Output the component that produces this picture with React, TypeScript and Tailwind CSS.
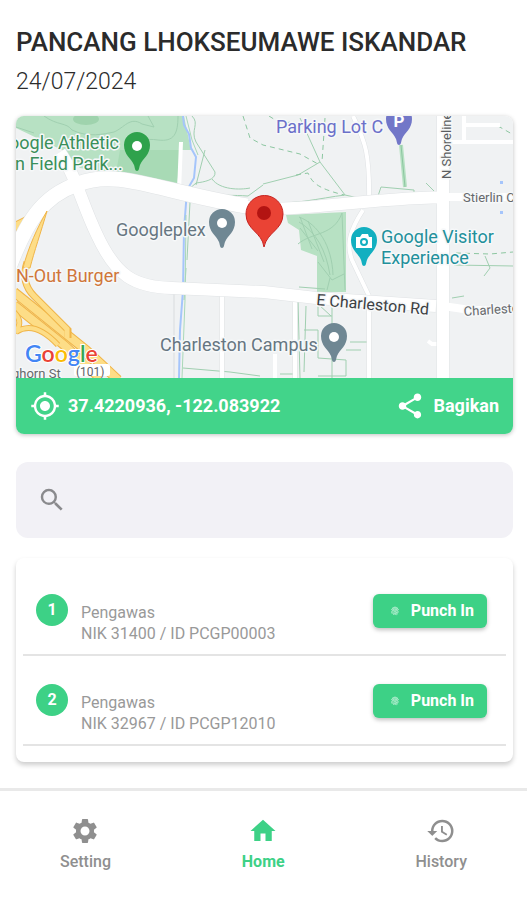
import React, { useState } from 'react'
import { MdFingerprint, MdHistory, MdHome, MdMyLocation, MdSearch, MdSettings, MdShare } from 'react-icons/md'

const members = [
  { no: 1, role: 'Pengawas', nik: '31400', id: 'PCGP00003' },
  { no: 2, role: 'Pengawas', nik: '32967', id: 'PCGP12010' },
]

const tabs = [
  { label: 'Setting', icon: MdSettings },
  { label: 'Home', icon: MdHome },
  { label: 'History', icon: MdHistory },
]

// Anchored at the tip of the pin
function Pin({ x, y, color, children }: { x: number; y: number; color: string; children?: React.ReactNode }) {
  return (
    <g transform={`translate(${x} ${y})`}>
      <path d="M0 1C-2 1-2-2-3-5C-6-12-13-15-13-25A13 13 0 0 1 13-25C13-15 6-12 3-5C2-2 2 1 0 1Z" fill={color} />
      {children ?? <circle cy="-24" r="5" fill="#fff" />}
    </g>
  )
}

function MapLabel({ x, y, color, size = 18, children }: { x: number; y: number; color: string; size?: number; children: React.ReactNode }) {
  return (
    <text x={x} y={y} fill={color} fontSize={size} stroke="#f6f8f9" strokeWidth="3" strokeLinejoin="round" paintOrder="stroke">
      {children}
    </text>
  )
}

function MapView() {
  return (
    <svg className="block w-full" viewBox="16 116 497 262" role="img" aria-label="Map">
      <rect x="16" y="116" width="497" height="262" fill="#f0f2f3" />

      {/* Parks */}
      <path d="M16 116H184L191 150H179L176 189L120 174L80 168L62 150L16 128Z" fill="#b7e1c3" />
      <path d="M120 150H180L177 189L116 173Z" fill="#a8dab5" />
      <ellipse cx="86" cy="119" rx="13" ry="6" fill="#9fd3ad" />
      <path d="M286 215L346 212V292H317V256L301 250L299 230L288 223Z" fill="#b7e1c3" />

      {/* Trails */}
      <g fill="none" stroke="#a0cfb0" strokeWidth="1">
        <path d="M44 116C58 126 66 122 72 130C88 138 104 134 114 132C124 128 130 116 142 124L154 127L148 116" />
        <path d="M16 127L34 133M178 116C178 134 174 142 158 140C146 138 138 142 130 140" />
        <path d="M192 116C200 124 190 130 196 142L215 172C216 180 204 182 196 183L188 190C190 198 220 194 248 196L263 185" />
        <path d="M205 150L196 185M212 179C220 190 240 190 250 188M190 202L187 260" />
        <path d="M300 118L320 162L345 195L363 199M263 184L298 175L320 162M263 202C290 206 320 198 345 195" />
        <path d="M378 196L381 187L414 190V193L384 195M426 183L435 192" />
        <path d="M299 217C318 224 332 246 333 275M299 222C316 232 326 250 330 275M300 228L318 251M298 244C312 232 334 236 342 213M342 213L345 290M318 262L332 280L344 274M330 278L327 290" />
        <path d="M300 217L312 249M308 221L324 262" />
        <path d="M298 300L300 378M306 306L304 372M318 305V316H332V304H318L331 316M304 330H318V358L346 360V376H318M350 342H367M346 350H361M332 316V378M318 342H304M280 374H293M183 368L230 372L260 376" />
        <path d="M186 268L184 300M299 287L325 289M454 265L513 266M485 256L490 268L484 276M452 298L464 296" />
      </g>
      <g fill="none" stroke="#8cc6a0" strokeWidth="1" strokeDasharray="5 4">
        <path d="M243 116L250 138L263 145L300 154L318 164M269 116L280 123L294 122M325 118L322 162M296 175L308 173C312 182 316 188 344 195" />
        <path d="M456 253L490 254L513 252M498 126L512 134" />
      </g>
      <path d="M401 145L405 187" stroke="#b7e1c3" strokeWidth="4" />
      <path d="M401 145L405 187" stroke="#8cc6a0" strokeWidth="1" />

      {/* Creek */}
      <path d="M183 116L184 125L189 134L191 148L196 157L194 178L187 190L184 230L183 290L180 330L179 378" fill="none" stroke="#a5c5fb" strokeWidth="2" />
      <path d="M186 116L192 140L198 155M186 215L185 300L182 378" fill="none" stroke="#a9d8b8" strokeWidth="1" />
      <path d="M174 290V378" stroke="#d9dcde" strokeWidth="1" />
      <rect x="500" y="181" width="3" height="3" fill="#a5c5fb" />
      <rect x="500" y="211" width="3" height="3" fill="#a5c5fb" />

      {/* Highway */}
      <g fill="none">
        <path d="M14 227L36 216" stroke="#f0b548" strokeWidth="9" />
        <path d="M14 227L36 216" stroke="#fddd87" strokeWidth="7" />
        <path d="M14 292L86 350L118 380" stroke="#f0b548" strokeWidth="10" />
        <path d="M14 292L86 350L118 380" stroke="#fddd87" strokeWidth="8" />
        <path d="M14 305L64 345L100 378" stroke="#f0b548" strokeWidth="10" />
        <path d="M14 305L64 345L100 378" stroke="#fddd87" strokeWidth="8" />
        <path d="M16 332C28 324 42 328 58 345M14 312C22 320 20 328 14 332" stroke="#f0b548" strokeWidth="6" />
        <path d="M16 332C28 324 42 328 58 345M14 312C22 320 20 328 14 332" stroke="#fddd87" strokeWidth="4" />
      </g>

      {/* Minor roads */}
      <g fill="none" stroke="#dfe2e4" strokeWidth="5">
        <path d="M353 116C364 140 370 150 369 202M363 210C350 230 346 244 352 260L369 296V378M222 290V378M295 298V378" />
      </g>
      <g fill="none" stroke="#fff" strokeWidth="4">
        <path d="M353 116C364 140 370 150 369 202M363 210C350 230 346 244 352 260L369 296V378M222 290V378M295 298V378" />
        <path d="M181 142L179 192M443 142H513M464 116V142M464 125H500M428 341L432 344H440M275 354V378" />
      </g>

      {/* Main roads */}
      <g fill="none" stroke="#e0e3e5">
        <path d="M8 270C26 222 42 196 78 184C118 168 160 192 247 206" strokeWidth="16" />
        <path d="M60 152C76 176 82 204 97 235C116 276 134 287 172 288L264 292L316 298L436 306" strokeWidth="13" />
        <path d="M240 206C300 214 340 200 443 197M443 116V378" strokeWidth="13" />
      </g>
      <g fill="none" stroke="#fff">
        <path d="M8 270C26 222 42 196 78 184C118 168 160 192 247 206" strokeWidth="15" />
        <path d="M60 152C76 176 82 204 97 235C116 276 134 287 172 288L264 292L316 298L436 306" strokeWidth="12" />
        <path d="M240 206C300 214 340 200 443 197M443 116V378" strokeWidth="12" />
        <path d="M443 197H513M443 306L470 310H513" strokeWidth="8" />
      </g>

      {/* Ramp */}
      <path d="M27 262C23 274 24 286 34 296L68 330V338" fill="none" stroke="#f0b548" strokeWidth="7" />
      <path d="M27 262C23 274 24 286 34 296L67 329V338" fill="none" stroke="#fddd87" strokeWidth="5" />
      <path d="M47 211C41 232 34 252 30 268H23C28 248 38 226 47 211Z" fill="#fddd87" stroke="#f0b548" />

      {/* Places */}
      <Pin x={137} y={170} color="#2fa24c" />
      <Pin x={222} y={247} color="#6f8793" />
      <Pin x={334} y={361} color="#6f8793" />
      <Pin x={399} y={144} color="#7277c8">
        <text x="0" y="-17" fill="#fff" fontSize="17" fontWeight="700" textAnchor="middle">P</text>
      </Pin>
      <Pin x={364} y={265} color="#12afc0">
        <path d="M-8-28H-4L-2-31H4L5-28H8V-17H-8Z" fill="#fff" />
        <circle cy="-23" r="3" fill="none" stroke="#12afc0" strokeWidth="2" />
      </Pin>

      <MapLabel x={9} y={149} color="#3a8f5a">oogle Athletic</MapLabel>
      <MapLabel x={15} y={170} color="#3a8f5a">n Field Park...</MapLabel>
      <MapLabel x={276} y={133} color="#6b70c9">Parking Lot C</MapLabel>
      <MapLabel x={116} y={236} color="#667681">Googleplex</MapLabel>
      <MapLabel x={381} y={243} color="#22909b">Google Visitor</MapLabel>
      <MapLabel x={381} y={264} color="#22909b">Experience</MapLabel>
      <MapLabel x={16} y={282} color="#d0763a">N-Out Burger</MapLabel>
      <MapLabel x={160} y={351} color="#667681">Charleston Campus</MapLabel>
      <g transform="rotate(-90 451 179)">
        <MapLabel x={451} y={179} color="#5a5d60" size={13}>N Shoreline</MapLabel>
      </g>
      <MapLabel x={463} y={202} color="#66696c" size={13}>Stierlin Ct</MapLabel>
      <g transform="rotate(-4 464 315)">
        <MapLabel x={464} y={316} color="#66696c" size={13}>Charleston</MapLabel>
      </g>
      <g transform="rotate(5 316 305)">
        <MapLabel x={316} y={305} color="#3c4043" size={16}>E Charleston Rd</MapLabel>
      </g>
      <MapLabel x={12} y={378} color="#66696c" size={13}>ghorn St</MapLabel>
      <rect x="74" y="364" width="36" height="12" rx="2" fill="#fff" />
      <text x="76" y="376" fill="#5f6368" fontSize="12">(101)</text>

      <text x="25" y="362" fontSize="23" fontWeight="600" stroke="#fff" strokeWidth="2" paintOrder="stroke" fontFamily="Lato, sans-serif">
        <tspan fill="#4285f4">G</tspan>
        <tspan fill="#ea4335">o</tspan>
        <tspan fill="#fbbc05">o</tspan>
        <tspan fill="#4285f4">g</tspan>
        <tspan fill="#34a853">l</tspan>
        <tspan fill="#ea4335">e</tspan>
      </text>

      {/* Current position */}
      <path d="M264 247C262 232 246 230 246 214A18 18 0 0 1 283 214C283 230 267 232 264 247Z" fill="#ea4335" stroke="#c5221f" />
      <circle cx="264" cy="213" r="7" fill="#b31412" />
    </svg>
  )
}

export default function App() {
  const [query, setQuery] = useState('')
  const [activeTab, setActiveTab] = useState('Home')

  return (
    <div className="flex min-h-screen flex-col bg-white font-[Roboto,sans-serif]">
      <main className="flex-1 pt-[26px] pr-[14px] pb-6 pl-4">
        <h1 className="text-[26px] leading-8 font-medium text-[#2b2b2b]">PANCANG LHOKSEUMAWE ISKANDAR</h1>
        <p className="mt-2 text-[23px] leading-8 font-light text-[#2b2b2b]">24/07/2024</p>

        {/* Location */}
        <section className="mt-[18px] overflow-hidden rounded-lg shadow-[0_1px_4px_rgba(0,0,0,0.25)]">
          <MapView />
          <div className="flex h-14 items-center justify-between bg-[#42d48a] px-[14px] text-lg font-bold text-white">
            <div className="flex items-center gap-2">
              <MdMyLocation size={30} />
              <span>37.4220936, -122.083922</span>
            </div>
            <button type="button" className="flex items-center gap-2">
              <MdShare size={30} />
              Bagikan
            </button>
          </div>
        </section>

        {/* Search */}
        <label className="mt-7 flex h-[76px] items-center gap-3 rounded-xl bg-[#f2f1f6] px-[21px]">
          <MdSearch size={30} className="shrink-0 text-[#8a8a8d]" />
          <input
            type="text"
            aria-label="Search"
            value={query}
            onChange={e => setQuery(e.target.value)}
            className="min-w-0 flex-1 bg-transparent text-lg outline-none"
          />
        </label>

        {/* Members */}
        <ul className="mt-5 rounded-lg px-[7px] pt-2 pb-4 shadow-[0_3px_5px_rgba(0,0,0,0.2)]">
          {members.map(m => (
            <li key={m.no} className="flex h-[90px] items-start border-b-2 border-[#e4e4e4] pt-7 pr-[19px] pl-[13px]">
              <span className="flex size-8 items-center justify-center rounded-full bg-[#3dd186] text-base font-bold text-white">
                {m.no}
              </span>
              <div className="ml-[13px] flex-1 pt-2 text-base leading-[21px] text-[#999]">
                <p>{m.role}</p>
                <p>NIK {m.nik} / ID {m.id}</p>
              </div>
              <button
                type="button"
                className="flex h-[34px] items-center gap-[11px] rounded-md bg-[#3dd186] pr-[13px] pl-[17px] text-base font-bold text-white shadow-[0_2px_4px_rgba(0,0,0,0.25)]"
              >
                <MdFingerprint size={10} />
                Punch In
              </button>
            </li>
          ))}
        </ul>
      </main>

      <nav className="flex h-28 items-start justify-between border-t-3 border-[#e9e9e9] px-[60px] pt-[25px]">
        {tabs.map(({ label, icon: Icon }) => (
          <button
            key={label}
            type="button"
            onClick={() => setActiveTab(label)}
            className={`flex flex-col items-center gap-1 text-base leading-6 ${
              label === activeTab ? 'font-bold text-[#3dd186]' : 'font-medium text-[#8f8f8f]'
            }`}
          >
            <Icon size={30} />
            {label}
          </button>
        ))}
      </nav>
    </div>
  )
}
